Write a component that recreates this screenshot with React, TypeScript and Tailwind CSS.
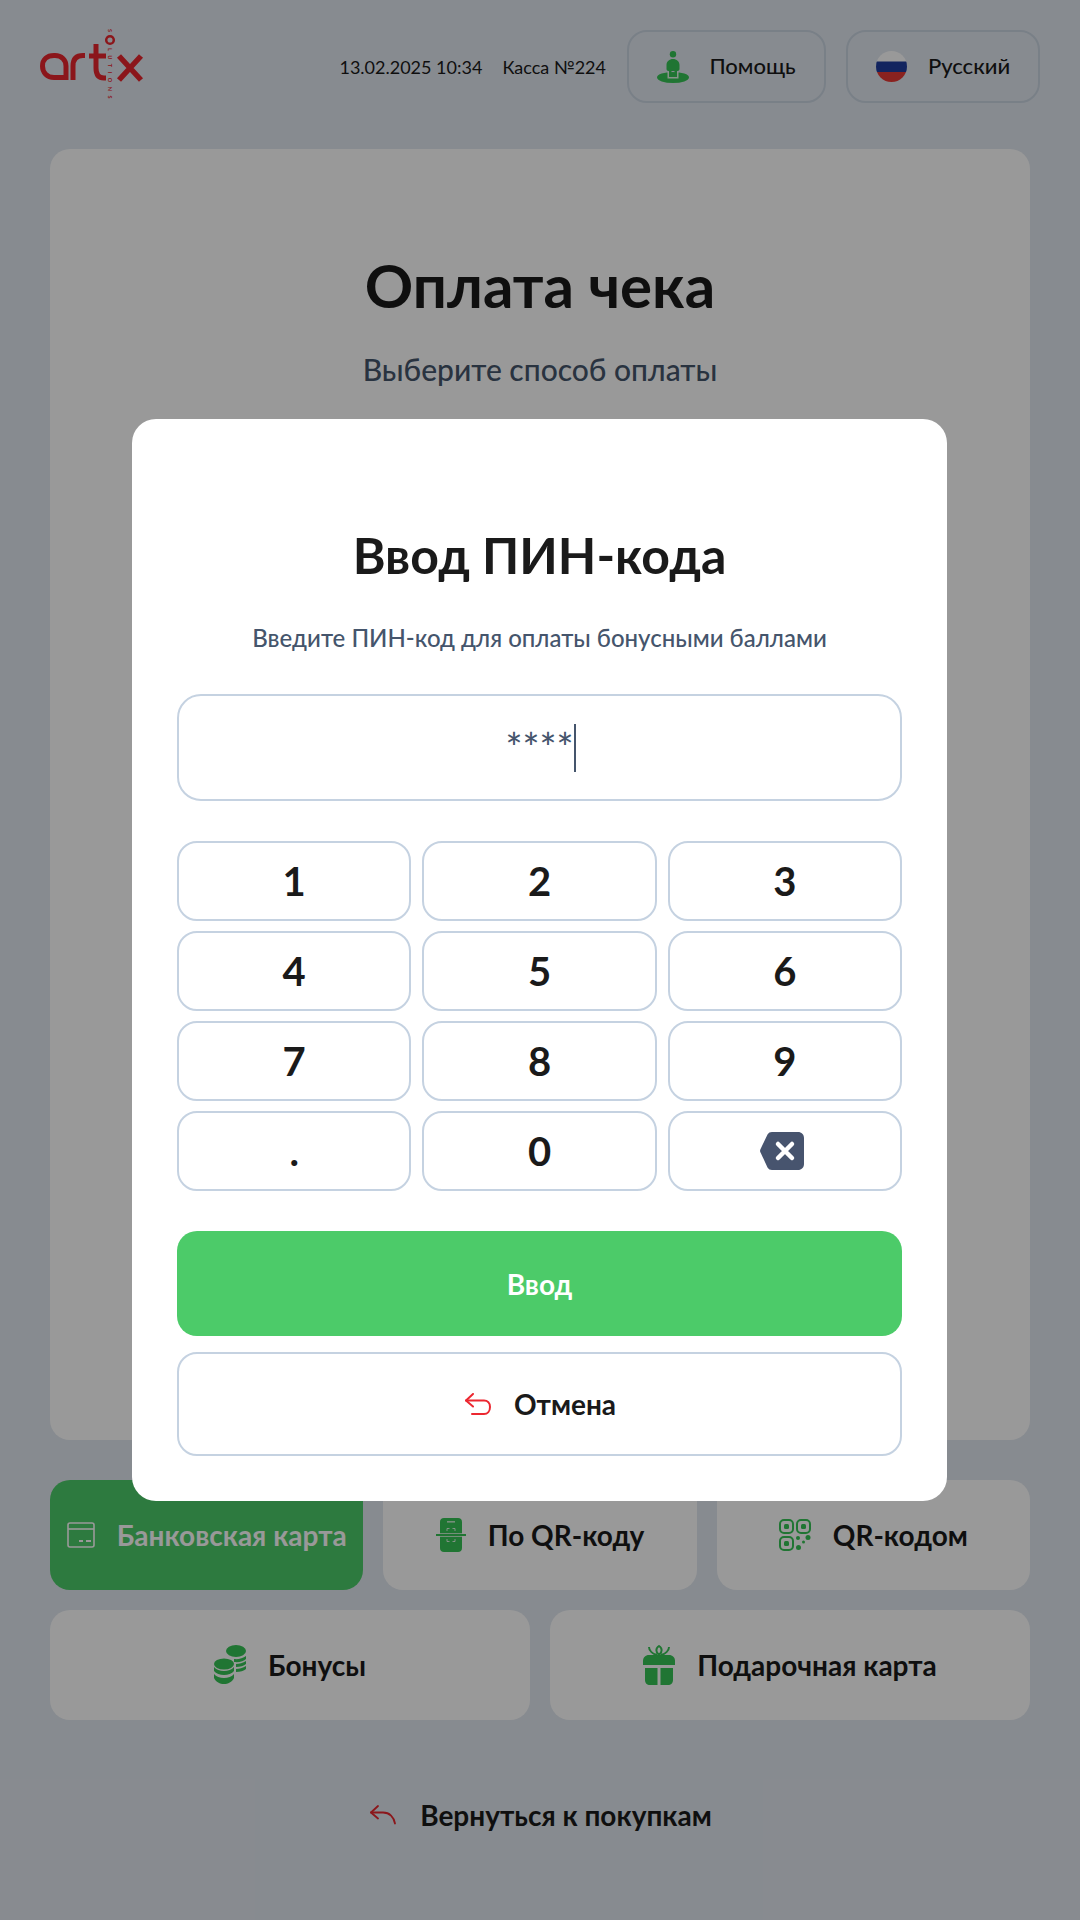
import React from 'react';

const GREEN = '#36c455';

const keys = ['1', '2', '3', '4', '5', '6', '7', '8', '9', '.', '0'];

const HelpIcon = () => (
  <svg width="32" height="32" viewBox="0 0 32 32" fill={GREEN}>
    <circle cx="16" cy="3.200" r="3.200" />
    <ellipse cx="16" cy="26.500" rx="16" ry="5.500" />
    <path d="M16 8c3.600 0 6.500 2.400 6.500 6v4c0 1.200-.8 2-2 2H20v6h-2.500v-6h-3v6H12v-6h-.5c-1.200 0-2-.8-2-2v-4c0-3.600 2.900-6 6.500-6z" />
    <path d="M10.500 21h1.500v5h8v-5h1.500v6.500h-11z" fill="#fff" opacity="0.85" />
  </svg>
);

const FlagIcon = () => (
  <svg width="31" height="31" viewBox="0 0 31 31">
    <clipPath id="flag-clip"><circle cx="15.500" cy="15.500" r="15.500" /></clipPath>
    <g clipPath="url(#flag-clip)">
      <rect width="31" height="11" fill="#fff" />
      <rect y="10.500" width="31" height="10.500" fill="#1f3d9e" />
      <rect y="21" width="31" height="10" fill="#e53935" />
    </g>
  </svg>
);

const CardIcon = () => (
  <svg width="28" height="26" viewBox="0 0 28 26" fill="none" stroke="#fff" strokeWidth="1.600">
    <rect x="1" y="1" width="26" height="24" rx="2" />
    <path d="M1 7h26" />
    <path d="M12 19h4M19 19h5" strokeWidth="1.800" />
  </svg>
);

const PhoneScanIcon = () => (
  <svg width="30" height="34" viewBox="0 0 30 34">
    <path d="M8 0h14c2.500 0 4 1.500 4 4v26c0 2.500-1.500 4-4 4H8c-2.500 0-4-1.500-4-4V4c0-2.500 1.500-4 4-4z" fill={GREEN} />
    <rect x="0" y="16" width="30" height="2" fill={GREEN} />
    <rect x="11" y="3" width="8" height="1.600" fill="#fff" opacity="0.7" />
    <path d="M11 13v-2.500h2.500M19 13v-2.500h-2.500M11 21v2.500h2.500M19 21v2.500h-2.500" stroke="#fff" strokeWidth="1" fill="none" opacity="0.8" />
    <rect x="4" y="15" width="22" height="1" fill="#fff" opacity="0.7" />
    <rect x="4" y="18" width="22" height="1" fill="#fff" opacity="0.7" />
  </svg>
);

const QrIcon = () => (
  <svg width="32" height="32" viewBox="0 0 32 32" fill="none" stroke={GREEN} strokeWidth="2">
    <rect x="1" y="1" width="13" height="13" rx="4" />
    <rect x="18" y="1" width="13" height="13" rx="4" />
    <rect x="1" y="18" width="13" height="13" rx="4" />
    <rect x="5" y="5" width="5" height="5" rx="1.500" fill={GREEN} stroke="none" />
    <rect x="22" y="5" width="5" height="5" rx="1.500" fill={GREEN} stroke="none" />
    <rect x="5" y="22" width="5" height="5" rx="1.500" fill={GREEN} stroke="none" />
    <g fill={GREEN} stroke="none">
      <circle cx="19" cy="19" r="2" />
      <circle cx="24.500" cy="23" r="1.500" />
      <circle cx="29" cy="18.500" r="2.500" />
      <circle cx="19.500" cy="28.500" r="2.500" />
    </g>
  </svg>
);

const CoinsIcon = () => (
  <svg width="32" height="40" viewBox="0 0 32 40" fill={GREEN}>
    <ellipse cx="22" cy="6" rx="10" ry="6" />
    <path d="M20 14c4 .5 9-.5 12-3v3c-2 2.500-7 3.500-12 3zM22 19c3 0 7-1 10-3v3c-2 2-6 3-10 3zM22 24c3 0 7-1 10-3v3c-2 2-6 3-10 3z" />
    <ellipse cx="10" cy="19" rx="10" ry="5.500" />
    <path d="M0 22c2 2.500 6 4 10 4s8-1.500 10-4v4c-2 2.500-6 4-10 4S2 28.500 0 26zM0 29c2 2.500 6 4 10 4s8-1.500 10-4v4c-2 4-6 6-10 6s-8-2-10-6z" />
  </svg>
);

const GiftIcon = () => (
  <svg width="32" height="40" viewBox="0 0 32 40" fill={GREEN}>
    <path d="M2 23h12.500v17H7c-3 0-5-2-5-5zM17.500 23H30v12c0 3-2 5-5 5h-7.500z" />
    <path d="M6 10h20c3.500 0 6 2.500 6 6v4H0v-4c0-3.500 2.500-6 6-6z" />
    <path d="M16 10c-3.500-3-3.500-7 0-9 3.500 2 3.500 6 0 9zM14 10C10 9 6 6 6 2M18 10c4-1 8-4 8-8" fill="none" stroke={GREEN} strokeWidth="2" />
  </svg>
);

const BackArrow = () => (
  <svg width="26" height="20" viewBox="0 0 26 20" fill="none" stroke="#e8262d" strokeWidth="1.800" strokeLinecap="round" strokeLinejoin="round">
    <path d="M8 1L1 7.500l7 6" />
    <path d="M1 7.500h12c6.500 0 11 4.500 12 11" />
  </svg>
);

const UndoArrow = () => (
  <svg width="26" height="22" viewBox="0 0 26 22" fill="none" stroke="#ec2730" strokeWidth="2" strokeLinecap="round" strokeLinejoin="round">
    <path d="M8 1L1 7.500l7 6" />
    <path d="M1 7.500h18c3.500 0 6 2.500 6 6.500s-2.500 7-6 7H7" />
  </svg>
);

const Logo = () => (
  <svg width="104" height="76" viewBox="0 0 104 76" fill="none" stroke="#e8262d" strokeWidth="5">
    <path d="M26 48.500H14C7 48.500 2.500 43.500 2.500 37S7 26.500 14 26.500h1c6.500 0 11 4.500 11 10.500v14" />
    <path d="M33 51V37c0-7 3.500-10.500 10-10.500h2" />
    <path d="M56 15v24c0 6.500 2.500 10 8 10h2M49 27h17" />
    <circle cx="70" cy="11" r="3.800" strokeWidth="2.500" />
    <path d="M79 27l22 24M101 27L79 51" strokeWidth="5.500" />
    <text transform="translate(67.500 0) rotate(90)" fontSize="5.500" fontWeight="700" fill="#e8262d" stroke="none" fontFamily="Lato, sans-serif">S</text>
    <text transform="translate(67.500 19) rotate(90)" fontSize="5.500" fontWeight="700" fill="#e8262d" stroke="none" fontFamily="Lato, sans-serif" letterSpacing="4.500">LUTIONS</text>
  </svg>
);

const PayButton = ({ icon, label, active }: { icon: React.ReactNode; label: string; active?: boolean }) => (
  <div className={`h-[110px] rounded-[20px] flex items-center justify-center gap-[22px] text-[28px] font-bold ${active ? 'bg-[#4ccb69] text-white' : 'bg-white text-[#1a1a1a]'}`}>
    {icon}
    <span>{label}</span>
  </div>
);

export default function App() {
  return (
    <div className="relative w-[1080px] h-[1920px] overflow-hidden bg-slate-200 font-['Lato',sans-serif] text-[#1a1a1a]">
      <header className="flex items-center h-[73px] pl-[40px] pr-[40px] mt-[30px]">
        <Logo />
        <div className="ml-auto mt-[2px] flex items-center gap-[20px] text-[18px]">
          <span>13.02.2025 10:34</span>
          <span>Касса №224</span>
        </div>
        <div className="ml-[21px] w-[199px] h-[73px] rounded-[20px] border-2 border-slate-300 flex items-center justify-center gap-[20px] text-[22px] font-medium">
          <HelpIcon />
          <span className="mb-[3px]">Помощь</span>
        </div>
        <div className="ml-[20px] w-[194px] h-[73px] rounded-[20px] border-2 border-slate-300 flex items-center justify-center gap-[21px] text-[22px] font-medium">
          <FlagIcon />
          <span className="mb-[3px]">Русский</span>
        </div>
      </header>

      <main className="px-[50px] mt-[46px]">
        <section className="h-[1291px] rounded-[20px] bg-white flex flex-col items-center pt-[100px]">
          <h1 className="text-[60px] leading-[72px] font-bold">Оплата чека</h1>
          <p className="mt-[26px] text-[30px] font-medium text-slate-600">Выберите способ оплаты</p>
        </section>

        <div className="mt-[40px] grid grid-cols-3 gap-[20px]">
          <PayButton icon={<CardIcon />} label="Банковская карта" active />
          <PayButton icon={<PhoneScanIcon />} label="По QR-коду" />
          <PayButton icon={<QrIcon />} label="QR-кодом" />
        </div>
        <div className="mt-[20px] grid grid-cols-2 gap-[20px]">
          <PayButton icon={<CoinsIcon />} label="Бонусы" />
          <PayButton icon={<GiftIcon />} label="Подарочная карта" />
        </div>

        <div className="mt-[74px] pl-[2px] flex items-center justify-center gap-[24px] text-[28px] font-bold">
          <BackArrow />
          <span>Вернуться к покупкам</span>
        </div>
      </main>

      <div className="absolute inset-0 bg-black/40 flex items-center justify-center pr-[1px]">
        <div className="w-[815px] h-[1082px] rounded-[24px] bg-white px-[45px] flex flex-col">
          <h2 className="mt-[107px] text-center text-[50px] leading-[58px] font-bold">Ввод ПИН-кода</h2>
          <p className="mt-[40px] text-center text-[24px] leading-[28px] font-medium text-slate-600">Введите ПИН-код для оплаты бонусными баллами</p>

          <div className="mt-[42px] h-[107px] rounded-[24px] border-2 border-[#c5d2e1] flex items-center justify-center">
            <span className="pl-[2px] h-[48px] leading-[46px] text-[40px] font-medium text-slate-600 border-r-2 border-slate-600">****</span>
          </div>

          <div className="mt-[40px] grid grid-cols-3 gap-x-[11px] gap-y-[10px]">
            {keys.map((key) => (
              <div key={key} className="h-[80px] rounded-[20px] border-2 border-[#c5d2e1] flex items-center justify-center text-[40px] font-bold">
                {key}
              </div>
            ))}
            <div className="h-[80px] rounded-[20px] border-2 border-[#c5d2e1] flex items-center justify-center pr-[5px]">
              <svg width="44" height="38" viewBox="0 0 44 38">
                <path d="M12 0h26c3.500 0 6 2.500 6 6v26c0 3.500-2.500 6-6 6H12c-2 0-3.500-.8-4.500-2.500L.8 21c-1-1.500-1-3 0-4.500L7.500 2.500C8.500.8 10 0 12 0z" fill="#47546e" />
                <path d="M18 12l14 14M32 12L18 26" stroke="#fff" strokeWidth="4.500" strokeLinecap="round" />
              </svg>
            </div>
          </div>

          <div className="mt-[40px] h-[105px] rounded-[20px] bg-[#4ccb69] text-white flex items-center justify-center text-[28px] font-bold">
            Ввод
          </div>
          <div className="mt-[16px] h-[104px] pl-[2px] rounded-[20px] border-2 border-[#c5d2e1] flex items-center justify-center gap-[23px] text-[28px] font-bold">
            <UndoArrow />
            <span>Отмена</span>
          </div>
        </div>
      </div>
    </div>
  );
}
